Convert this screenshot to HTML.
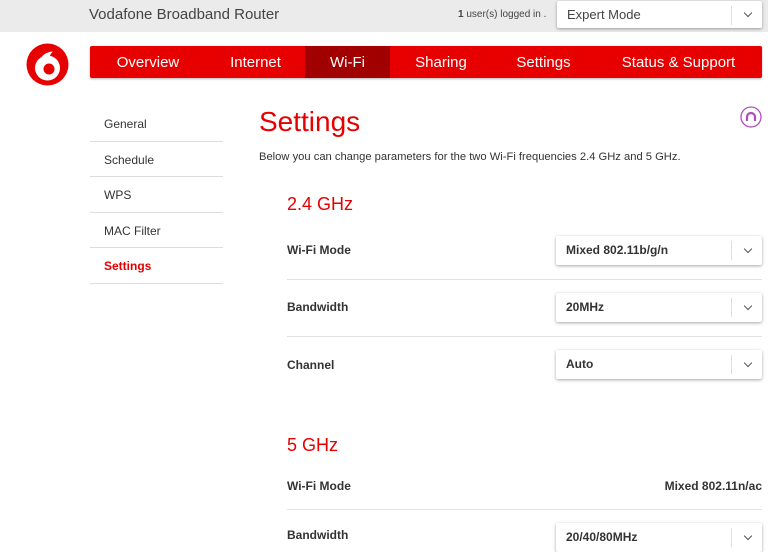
<!DOCTYPE html>
<html><head><style>
*{margin:0;padding:0;box-sizing:border-box}
body{width:768px;height:535px;overflow:hidden;background:#fff;font-family:"Liberation Sans",Arial,sans-serif;color:#333;position:relative}
.top{position:absolute;left:0;top:0;width:768px;height:32px;background:#ebebeb}
.abs{position:absolute}
.nav{position:absolute;left:90px;top:46px;width:672px;height:32px;background:#e60000;border-radius:2px;box-shadow:0 1px 2px rgba(0,0,0,.3)}
.nav span{position:absolute;top:0;height:32px;line-height:33px;color:#fff;font-size:15px;text-align:center}
.side{position:absolute;left:90px;width:133px;border-bottom:1px solid #ddd;font-size:12px;color:#333;padding-left:14px;height:35.5px;line-height:36px}
.lbl{position:absolute;left:287px;font-size:12px;font-weight:bold;color:#333}
.sel{position:absolute;left:556px;width:206px;height:29px;border-radius:2px;box-shadow:0 1px 3px rgba(0,0,0,.35);background:#fff;font-size:12px;font-weight:bold;line-height:29px;padding-left:10px;color:#333}
.sel:after{content:"";position:absolute;right:30px;top:5px;height:19px;border-left:1px solid #ddd}
.sel i{position:absolute;right:11px;top:10px;width:6px;height:6px;border-right:1.5px solid #555;border-bottom:1.5px solid #555;transform:rotate(45deg)}
.hr{position:absolute;left:287px;width:475px;border-top:1px solid #e2e2e2}
</style></head><body>
<div class="top"></div>
<div class="abs" style="left:89px;top:6px;font-size:15px;color:#444">Vodafone Broadband Router</div>
<div class="abs" style="left:458px;top:9px;font-size:10px;color:#444"><b>1</b> user(s) logged in .</div>
<div class="sel" style="top:1px;left:557px;width:205px;height:27px;line-height:27px;font-weight:normal;font-size:13px;color:#444">Expert Mode<i style="top:9px"></i></div>
<svg class="abs" style="left:26px;top:43px" width="43" height="43" viewBox="0 0 43 43"><circle cx="21.5" cy="21.5" r="21" fill="#e60000"/><circle cx="21.5" cy="25" r="12.5" fill="#fff"/><circle cx="23" cy="26" r="5.5" fill="#e60000"/><path d="M13 22C13 14 19 9 27 8.5C24 11 22.5 15 23 20.5C19 20 15 21 13 24z" fill="#fff"/></svg>
<div class="nav">
<span style="left:0;width:116px">Overview</span>
<span style="left:116px;width:99px">Internet</span>
<span style="left:215px;width:85px;background:#a00000">Wi-Fi</span>
<span style="left:300px;width:102px">Sharing</span>
<span style="left:402px;width:103px">Settings</span>
<span style="left:505px;width:167px">Status &amp; Support</span>
</div>
<div class="side" style="top:106px">General</div>
<div class="side" style="top:141.5px">Schedule</div>
<div class="side" style="top:177px">WPS</div>
<div class="side" style="top:212.5px">MAC Filter</div>
<div class="side" style="top:248px;color:#e60000;font-weight:bold">Settings</div>
<div class="abs" style="left:259px;top:106px;font-size:28px;color:#e60000">Settings</div>
<svg class="abs" style="left:740px;top:106px" width="22" height="22" viewBox="0 0 22 22"><circle cx="11" cy="11" r="10" fill="none" stroke="#b04cc0" stroke-width="1.3"/><path d="M7 15v-4a4 4 0 0 1 8 0v4" fill="none" stroke="#b04cc0" stroke-width="2.2"/></svg>
<div class="abs" style="left:259px;top:151px;font-size:11.2px;color:#333">Below you can change parameters for the two Wi-Fi frequencies 2.4 GHz and 5 GHz.</div>
<div class="abs" style="left:287px;top:194px;font-size:18px;color:#e60000">2.4 GHz</div>
<div class="lbl" style="top:243px">Wi-Fi Mode</div>
<div class="sel" style="top:236px">Mixed 802.11b/g/n<i></i></div>
<div class="hr" style="top:279px"></div>
<div class="lbl" style="top:300px">Bandwidth</div>
<div class="sel" style="top:293px">20MHz<i></i></div>
<div class="hr" style="top:336px"></div>
<div class="lbl" style="top:358px">Channel</div>
<div class="sel" style="top:350px">Auto<i></i></div>
<div class="abs" style="left:287px;top:435px;font-size:18px;color:#e60000">5 GHz</div>
<div class="lbl" style="top:479px">Wi-Fi Mode</div>
<div class="abs" style="right:6px;top:479px;font-size:12px;font-weight:bold;color:#333">Mixed 802.11n/ac</div>
<div class="hr" style="top:509px"></div>
<div class="lbl" style="top:528px">Bandwidth</div>
<div class="sel" style="top:523px">20/40/80MHz<i></i></div>
</body></html>
